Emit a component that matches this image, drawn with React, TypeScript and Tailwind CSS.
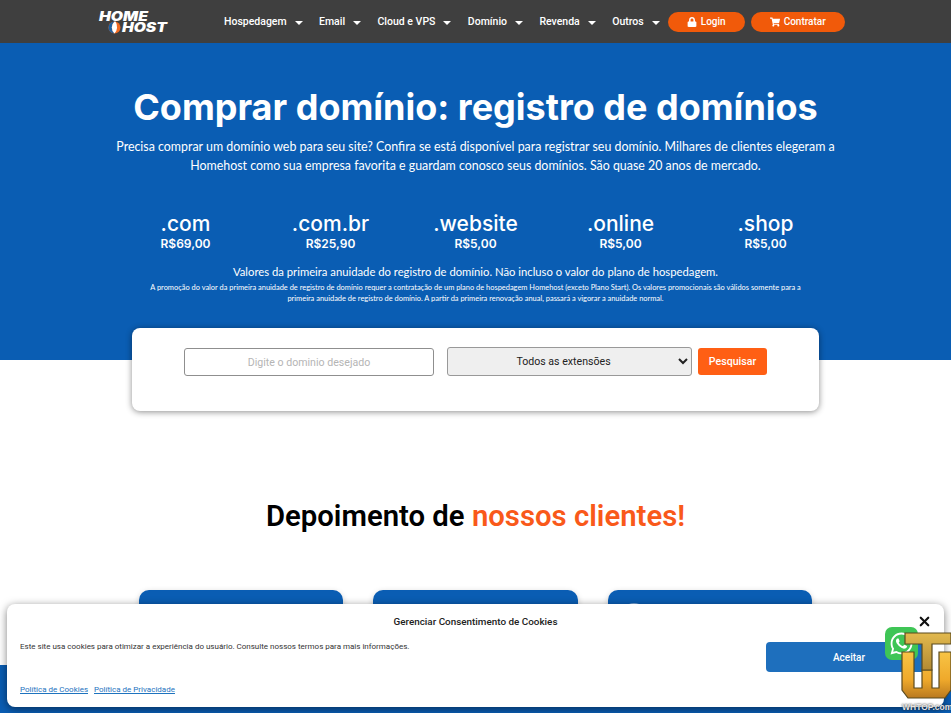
import { X } from 'lucide-react'
import { FaLock, FaShoppingCart, FaWhatsapp } from 'react-icons/fa'

const menu = ['Hospedagem', 'Email', 'Cloud e VPS', 'Domínio', 'Revenda', 'Outros']

const tlds = [
  { name: '.com', price: 'R$69,00' },
  { name: '.com.br', price: 'R$25,90' },
  { name: '.website', price: 'R$5,00' },
  { name: '.online', price: 'R$5,00' },
  { name: '.shop', price: 'R$5,00' },
]

function Logo() {
  return (
    <svg width="70" height="26" viewBox="0 0 70 26" className="shrink-0 overflow-visible">
      <text x="0" y="12" textLength="49" lengthAdjust="spacingAndGlyphs" fill="white" fontFamily="Inter, sans-serif" fontSize="13" fontWeight="900" fontStyle="italic">
        HOME
      </text>
      <text x="23" y="23" textLength="45" lengthAdjust="spacingAndGlyphs" fill="white" fontFamily="Inter, sans-serif" fontSize="13" fontWeight="900" fontStyle="italic">
        HOST
      </text>
      <circle cx="15.5" cy="18.5" r="6" fill="#f26a21" />
      <path d="M15.5 12.5a6 6 0 0 0 0 12a8 8 0 0 1 0-12z" fill="#1d5f9f" />
      <path d="M15.5 12.5a8 8 0 0 0 0 12a6 8 0 0 0 1-12z" fill="white" />
    </svg>
  )
}

function Navbar() {
  return (
    <header className="flex h-[43px] items-center bg-[#3f3f3f] pl-[99px] font-['Roboto',sans-serif] text-white">
      <Logo />
      <nav className="ml-[55px] flex items-center gap-[16.4px] text-[10.5px] font-medium">
        {menu.map((m) => (
          <span key={m} className="flex items-center gap-[8px] whitespace-nowrap">
            {m}
            <span className="mt-[2px] h-0 w-0 border-x-[4px] border-t-[4px] border-x-transparent border-t-white" />
          </span>
        ))}
      </nav>
      <div className="ml-[8px] flex gap-[6px] text-[10px] font-medium">
        <button className="flex h-[20px] w-[77px] items-center justify-center gap-[4px] rounded-full bg-[#f15a0a]">
          <FaLock size={10} />
          Login
        </button>
        <button className="flex h-[20px] w-[94px] items-center justify-center gap-[4px] rounded-full bg-[#f15a0a]">
          <FaShoppingCart size={10} />
          Contratar
        </button>
      </div>
    </header>
  )
}

function Hero() {
  return (
    <section className="h-[317px] bg-[#0a5db3] pt-[41px] text-center font-['Inter',sans-serif] text-white">
      <h1 className="text-[36px] leading-[46px] font-bold">Comprar domínio: registro de domínios</h1>
      <p className="mx-auto mt-[8px] w-[740px] font-['Lato',sans-serif] text-[12.4px] leading-[18.5px]">
        Precisa comprar um domínio web para seu site? Confira se está disponível para registrar seu domínio. Milhares de clientes elegeram a Homehost como sua empresa favorita e guardam conosco seus domínios. São quase 20 anos de mercado.
      </p>
      <div className="mx-auto mt-[38px] grid w-[725px] grid-cols-5">
        {tlds.map((t) => (
          <div key={t.name}>
            <div className="text-[21px] leading-[22px] font-medium">{t.name}</div>
            <div className="text-[12px] leading-[18px] font-semibold">{t.price}</div>
          </div>
        ))}
      </div>
      <p className="mt-[11px] font-['Lato',sans-serif] text-[11.27px] leading-[16px]">
        Valores da primeira anuidade do registro de domínio. Não incluso o valor do plano de hospedagem.
      </p>
      <p className="mx-auto mt-[2px] w-[660px] font-['Lato',sans-serif] text-[7.44px] leading-[11px]">
        A promoção do valor da primeira anuidade de registro de domínio requer a contratação de um plano de hospedagem Homehost (exceto Plano Start). Os valores promocionais são válidos somente para a primeira anuidade de registro de domínio. A partir da primeira renovação anual, passará a vigorar a anuidade normal.
      </p>
    </section>
  )
}

function SearchCard() {
  return (
    <div className="relative mx-auto mt-[-32px] h-[83px] w-[687px] rounded-[8px] bg-white pt-[19px] pl-[52px] font-['Roboto',sans-serif] shadow-[0_1px_6px_rgba(0,0,0,0.45)]">
      <div className="flex items-start">
        <input
          placeholder="Digite o dominio desejado"
          className="mt-[1px] h-[28px] w-[250px] rounded-[3px] border border-[#8f8f8f] text-center text-[10.6px] placeholder:text-[#b5b5b5]"
        />
        <select className="ml-[13px] h-[29px] w-[245px] rounded-[3px] border border-[#999] bg-[#efefef] text-center text-[10.6px] text-[#222]">
          <option>Todos as extensões</option>
        </select>
        <button className="ml-[6px] h-[27px] w-[69px] translate-y-[1px] rounded-[3px] bg-[#ff5f14] text-[10.6px] font-medium text-white">
          Pesquisar
        </button>
      </div>
    </div>
  )
}

function Testimonials() {
  return (
    <section className="font-['Roboto',sans-serif]">
      <h2 className="mt-[86px] text-center text-[29.3px] leading-[38px] font-semibold text-black">
        Depoimento de <span className="text-[#f9591a]">nossos clientes!</span>
      </h2>
      <div className="mx-auto mt-[55px] grid w-[673px] grid-cols-3 gap-[30px]">
        {[0, 1, 2].map((i) => (
          <div key={i} className="h-[75px] rounded-t-[10px] bg-[#0a5db3] pt-[13px] pl-[13px] shadow-[0_2px_6px_rgba(0,0,0,0.2)]">
            {i === 2 && <div className="h-[26px] w-[26px] rounded-full bg-[#7fa8d6]" />}
          </div>
        ))}
      </div>
    </section>
  )
}

function CookieBanner() {
  return (
    <div className="absolute top-[604px] left-[7px] h-[103px] w-[937px] rounded-[8px] bg-white font-['Roboto',sans-serif] shadow-[0_2px_8px_rgba(0,0,0,0.5)]">
      <div className="pt-[11px] text-center text-[9.9px] leading-[14px] font-medium text-[#222]">
        Gerenciar Consentimento de Cookies
      </div>
      <X className="absolute top-[10px] right-[12px] text-[#111]" size={15} strokeWidth={3.5} />
      <p className="mt-[12px] pl-[13px] text-[8px] leading-[12px] text-[#333]">
        Este site usa cookies para otimizar a experiência do usuário. Consulte nossos termos para mais informações.
      </p>
      <button className="absolute top-[38px] right-[12px] h-[30px] w-[166px] rounded-[4px] bg-[#1e6fbd] text-[10px] font-medium text-white">
        Aceitar
      </button>
      <div className="absolute bottom-[11px] left-[13px] flex gap-[6px] text-[8px] leading-[12px] text-[#1e73be] underline">
        <span>Política de Cookies</span>
        <span>Política de Privacidade</span>
      </div>
    </div>
  )
}

function Badge() {
  return (
    <>
      <div className="absolute top-[627px] left-[885px] flex h-[33px] w-[33px] items-center justify-center rounded-[7px] bg-[#3fc556] text-white">
        <FaWhatsapp size={25} />
      </div>
      <div className="absolute top-[630px] left-[900px] h-[83px] w-[51px]">
        <svg viewBox="0 0 51 72" width="51" height="72">
          <defs>
            <linearGradient id="gold" x1="0" y1="0" x2="0" y2="1">
              <stop offset="0" stopColor="#f8c445" />
              <stop offset="0.6" stopColor="#efa92b" />
              <stop offset="1" stopColor="#b9791f" />
            </linearGradient>
            <linearGradient id="bar" x1="0" y1="0" x2="0" y2="1">
              <stop offset="0" stopColor="#e2b94e" />
              <stop offset="1" stopColor="#b28a33" />
            </linearGradient>
          </defs>
          <path
            d="M2 22h12v36h8V40h10v18h7V22h12v38l-6 8H8l-6-8z"
            fill="url(#gold)"
            stroke="#5a4a1e"
            strokeWidth="1.2"
          />
          <path d="M5 3h46v11H32v26H22V14H5z" fill="url(#bar)" stroke="#5a4a1e" strokeWidth="1.2" />
        </svg>
        <div className="absolute top-[72px] left-[2px] font-['Liberation_Sans',sans-serif] text-[8.5px] leading-[10px] font-bold whitespace-nowrap text-[#e4e4e4] [text-shadow:0_0_2px_#222]">
          WHTOP.com
        </div>
      </div>
    </>
  )
}

export default function App() {
  return (
    <div className="relative h-[713px] overflow-hidden bg-white">
      <Navbar />
      <Hero />
      <SearchCard />
      <Testimonials />
      <div className="absolute inset-x-0 top-[665px] bottom-0 bg-[#0a5db3]" />
      <CookieBanner />
      <Badge />
    </div>
  )
}
